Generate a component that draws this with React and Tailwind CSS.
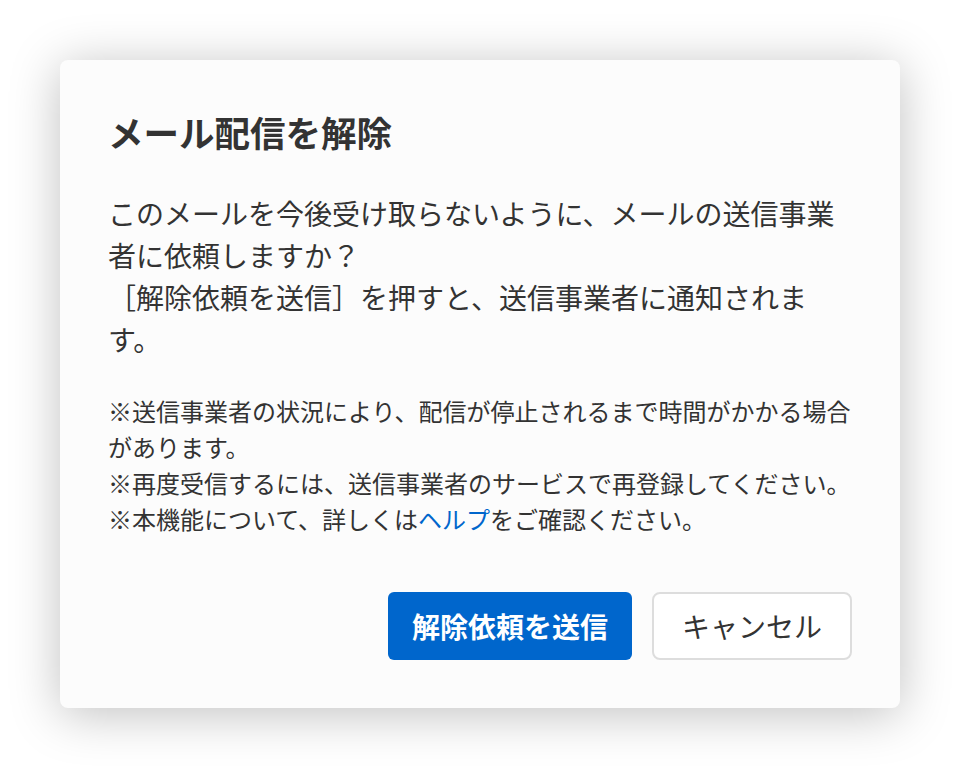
export default function App() {
    return (
        <div className="w-[960px] h-[768px] bg-white pt-[60px] pl-[60px]"
             style={{ fontFamily: '"Noto Sans CJK JP", "Noto Sans", sans-serif' }}>
            <div className="w-[840px] h-[648px] rounded-[8px] bg-[#fcfcfc] shadow-[0_6px_50px_rgba(0,0,0,0.25)] pt-12 pb-12 pl-12 pr-[42px] flex flex-col text-[#333]">
                {/* タイトル */}
                <h2 className="text-[35.5px] leading-[48px] font-bold">メール配信を解除</h2>

                {/* 本文 */}
                <p className="mt-[36px] text-[28px] leading-[42px]">
                    このメールを今後受け取らないように、メールの送信事業者に依頼しますか？<br />
                    ［解除依頼を送信］を押すと、送信事業者に通知されます。
                </p>

                {/* 注意書き */}
                <div className="mt-[33px] text-[24px] leading-[36px]">
                    <p>※送信事業者の状況により、配信が停止されるまで時間がかかる場合があります。</p>
                    <p>※再度受信するには、送信事業者のサービスで再登録してください。</p>
                    <p>※本機能について、詳しくは<a href="#" className="text-[#0066cc]">ヘルプ</a>をご確認ください。</p>
                </div>

                <div className="mt-auto flex justify-end gap-5 pr-[6px]">
                    <button type="button"
                            className="w-[244px] h-[68px] rounded-[6px] bg-[#0066cc] text-white text-[28px] font-bold">
                        解除依頼を送信
                    </button>
                    <button type="button"
                            className="w-[200px] h-[68px] rounded-[8px] bg-white border-2 border-[#dddddd] text-[28px] text-[#333]">
                        キャンセル
                    </button>
                </div>
            </div>
        </div>
    );
}
